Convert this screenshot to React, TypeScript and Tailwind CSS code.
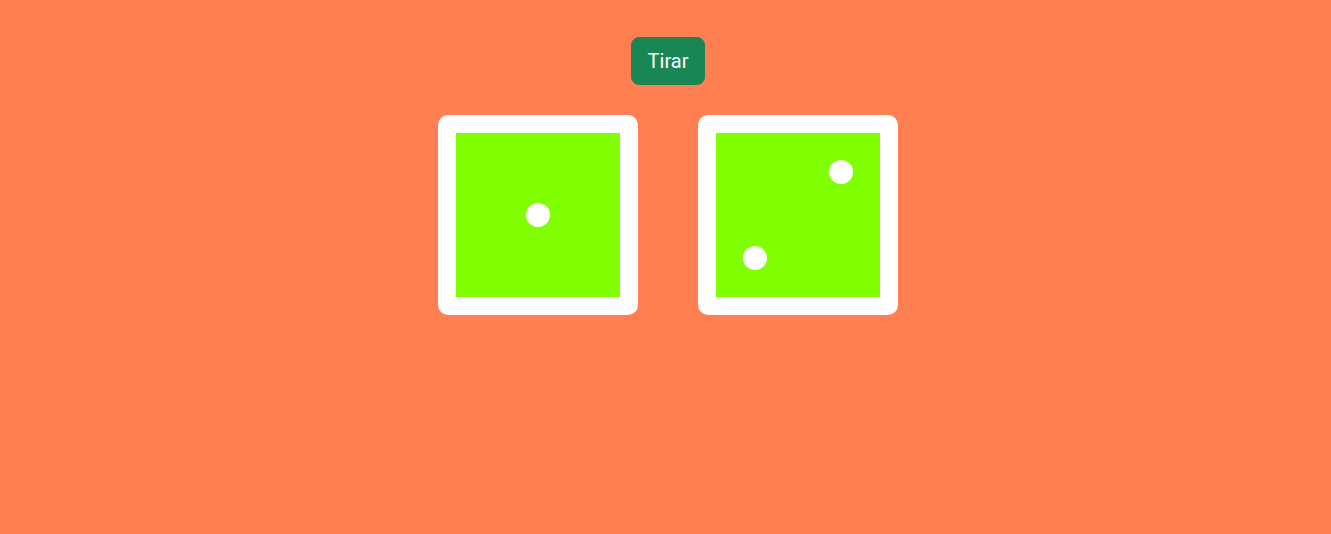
const pips: Record<number, [number, number][]> = {
  1: [[50, 50]],
  2: [
    [76, 24],
    [24, 76],
  ],
};

function Die({ value }: { value: number }) {
  return (
    <div className="h-[200px] w-[200px] rounded-[10px] bg-white p-[18px]">
      <div className="relative h-full w-full bg-[#7fff00]">
        {pips[value].map(([x, y], i) => (
          <span
            key={i}
            className="absolute h-[24px] w-[24px] -translate-x-1/2 -translate-y-1/2 rounded-full bg-white"
            style={{ left: `${x}%`, top: `${y}%` }}
          />
        ))}
      </div>
    </div>
  );
}

export default function App() {
  return (
    <div
      className="flex min-h-[534px] w-full flex-col items-center gap-[30px] bg-[#ff7f50] pl-[5px] pt-[37px]"
      style={{ fontFamily: "Roboto, 'Liberation Sans', sans-serif" }}
    >
      <button className="h-[48px] rounded-[8px] border border-[#198754] bg-[#198754] px-4 text-[20px] leading-[30px] text-white">
        Tirar
      </button>
      <div className="flex gap-[60px]">
        <Die value={1} />
        <Die value={2} />
      </div>
    </div>
  );
}
